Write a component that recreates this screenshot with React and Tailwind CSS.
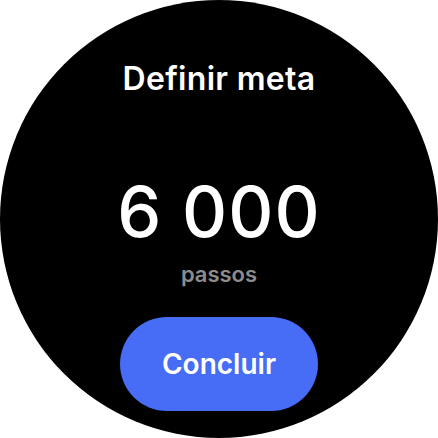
export default function App() {
  return (
    <div className="w-[438px] h-[438px] bg-white">
      <div
        className="w-[438px] h-[438px] rounded-full bg-black flex flex-col items-center text-white"
        style={{ fontFamily: 'Inter, "Noto Sans", sans-serif' }}
      >
        {/* Title */}
        <h1 className="mt-[59px] text-[32px] leading-[40px] font-semibold tracking-[0.3px]">
          Definir meta
        </h1>

        {/* Goal value */}
        <div className="mt-[78px] text-[70px] leading-[70px] font-medium tracking-[1px]">6 000</div>
        <div className="mt-[13px] text-[22px] leading-[28px] font-semibold text-[#8c8c8c]">
          passos
        </div>

        {/* Confirm button */}
        <button
          type="button"
          className="mt-[29px] w-[198px] h-[94px] rounded-full bg-[#476cf6] text-[28px] font-semibold text-white"
        >
          Concluir
        </button>
      </div>
    </div>
  );
}
